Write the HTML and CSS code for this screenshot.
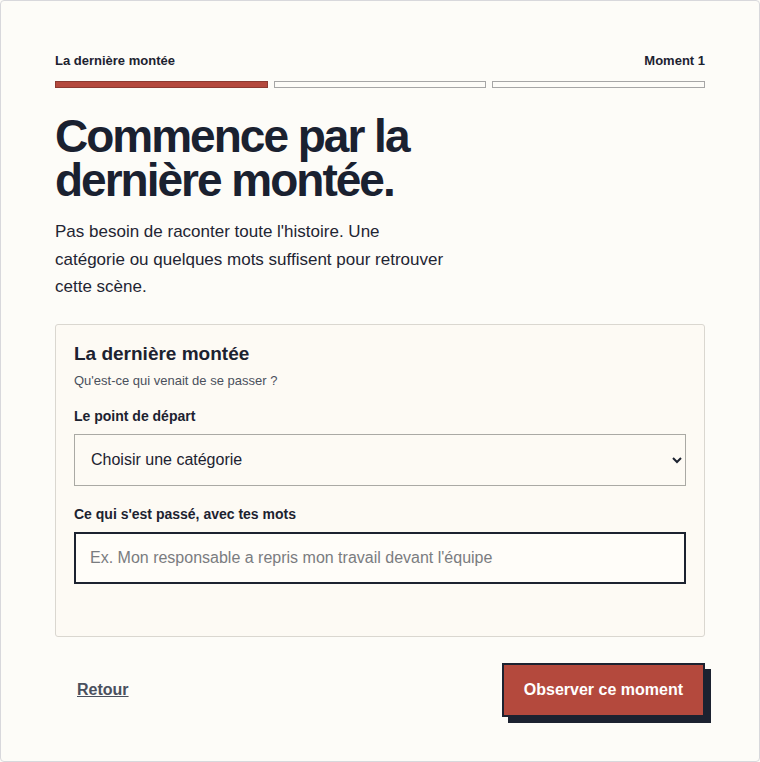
FILE: index.html
```html
<!DOCTYPE html>
<html lang="fr">
<head>
<meta charset="utf-8">
<title>La dernière montée</title>
<link rel="stylesheet" href="styles.css">
</head>
<body>
<main class="frame">
  <header class="progress">
    <div class="progress-labels">
      <span>La dernière montée</span>
      <span>Moment 1</span>
    </div>
    <div class="progress-bars">
      <span class="bar bar-active"></span>
      <span class="bar"></span>
      <span class="bar"></span>
    </div>
  </header>

  <h1 class="title">Commence par la dernière montée.</h1>
  <p class="lead">Pas besoin de raconter toute l'histoire. Une catégorie ou quelques mots suffisent pour retrouver cette scène.</p>

  <section class="card">
    <h2 class="card-title">La dernière montée</h2>
    <p class="card-sub">Qu'est-ce qui venait de se passer ?</p>

    <label class="field-label" for="cat">Le point de départ</label>
    <select id="cat" class="select">
      <option>Choisir une catégorie</option>
    </select>

    <label class="field-label" for="words">Ce qui s'est passé, avec tes mots</label>
    <input id="words" class="input" type="text" placeholder="Ex. Mon responsable a repris mon travail devant l'équipe">
  </section>

  <div class="actions">
    <a class="back" href="#">Retour</a>
    <button class="primary" type="button">Observer ce moment</button>
  </div>
</main>
</body>
</html>
```

FILE: styles.css
```css
html, body {
  margin: 0;
  padding: 0;
  background: #fdfcf8;
}

body {
  font-family: "Liberation Sans", Arial, sans-serif;
  color: #1c2230;
}

.frame {
  box-sizing: border-box;
  width: 760px;
  height: 762px;
  border: 1px solid #d8d8dc;
  border-radius: 4px;
  padding: 52px 54px 0;
  background: #fdfcf8;
}

.progress-labels {
  display: flex;
  justify-content: space-between;
  font-size: 13px;
  font-weight: 700;
  line-height: 15px;
}

.progress-bars {
  display: grid;
  grid-template-columns: 1fr 1fr 1fr;
  gap: 6px;
  margin-top: 13px;
}

.bar {
  display: block;
  height: 7px;
  box-sizing: border-box;
  border: 1px solid #a6a6a6;
  background: #fdfcf8;
}

.bar-active {
  background: #b4493d;
  border-color: #8c3a31;
}

.title {
  margin: 26px 0 0;
  max-width: 420px;
  font-size: 46px;
  line-height: 44px;
  font-weight: 700;
  letter-spacing: -2px;
  color: #1a2130;
}

.lead {
  margin: 16px 0 0;
  max-width: 396px;
  font-size: 17px;
  line-height: 27.5px;
  color: #1f2533;
}

.card {
  margin-top: 23px;
  border: 1px solid #dad7d0;
  border-radius: 3px;
  background: #fdfaf4;
  padding: 18px 18px 52px;
}

.card-title {
  margin: 0;
  font-size: 19px;
  line-height: 22px;
  font-weight: 700;
}

.card-sub {
  margin: 8px 0 0;
  font-size: 13px;
  line-height: 16px;
  color: #4a505c;
}

.field-label {
  display: block;
  margin-top: 19px;
  font-size: 14px;
  line-height: 17px;
  font-weight: 700;
}

.select {
  display: block;
  box-sizing: border-box;
  width: 100%;
  height: 52px;
  margin-top: 9px;
  padding: 0 12px;
  border: 1px solid #aaa9a4;
  border-radius: 0;
  background: #fdfaf4;
  font-family: inherit;
  font-size: 16px;
  color: #1c2230;
}

.select + .field-label {
  margin-top: 20px;
}

.input {
  display: block;
  box-sizing: border-box;
  width: 100%;
  height: 52px;
  margin-top: 9px;
  padding: 0 14px;
  border: 2px solid #1c2230;
  border-radius: 0;
  background: #fffdf9;
  font-family: inherit;
  font-size: 16px;
  color: #1c2230;
}

.input::placeholder {
  color: #7a7c80;
}

.actions {
  display: flex;
  justify-content: space-between;
  align-items: center;
  margin-top: 26px;
}

.back {
  margin-left: 22px;
  font-size: 16px;
  font-weight: 700;
  color: #4a505e;
  text-decoration: underline;
}

.primary {
  box-sizing: border-box;
  height: 54px;
  padding: 0 20px;
  border: 2px solid #1c2230;
  border-radius: 0;
  background: #b4493d;
  color: #fff;
  font-family: inherit;
  font-size: 16px;
  font-weight: 700;
  box-shadow: 6px 6px 0 #1c2230;
  cursor: pointer;
}
```
